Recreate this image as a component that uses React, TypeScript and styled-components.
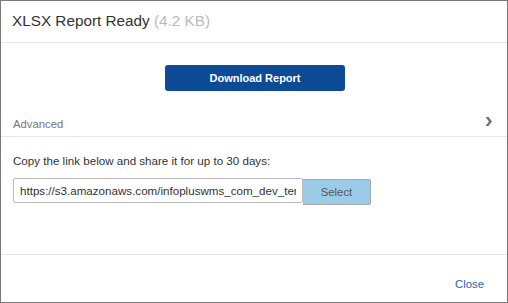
import styled, { createGlobalStyle } from "styled-components";

const GlobalStyle = createGlobalStyle`
  html, body { margin: 0; padding: 0; background: #fff; }
  * { box-sizing: border-box; }
`;

export default function App() {
  return (
    <>
      <GlobalStyle />
      <Modal>
        <Header>
          <Title>
            XLSX Report Ready <Size>(4.2 KB)</Size>
          </Title>
        </Header>
        <Body>
          <ButtonRow>
            <PrimaryButton>Download Report</PrimaryButton>
          </ButtonRow>
          <AdvancedRow>
            <AdvancedLabel>Advanced</AdvancedLabel>
            <Chevron viewBox="0 0 7 9" width="7" height="9">
              <path d="M0.5 0 L3.5 0 L7 4.5 L3.5 9 L0.5 9 L4 4.5 Z" fill="#6f6f73" />
            </Chevron>
          </AdvancedRow>
          <ShareSection>
            <Hint>Copy the link below and share it for up to 30 days:</Hint>
            <LinkRow>
              <LinkInput
                readOnly
                value="https://s3.amazonaws.com/infopluswms_com_dev_temp/report.xlsx"
              />
              <SelectButton>Select</SelectButton>
            </LinkRow>
          </ShareSection>
        </Body>
        <Footer>
          <CloseLink>Close</CloseLink>
        </Footer>
      </Modal>
    </>
  );
}

const Modal = styled.div`
  width: 508px;
  height: 303px;
  border: 1px solid #7a7a7a;
  display: flex;
  flex-direction: column;
  font-family: "Liberation Sans", Arial, sans-serif;
  color: #333;
`;

const Header = styled.div`
  height: 42px;
  border-bottom: 1px solid #e5e5e5;
  display: flex;
  align-items: center;
  padding: 0 11px 2px;
`;

const Title = styled.h3`
  margin: 0;
  font-size: 15.3px;
  font-weight: normal;
  color: #333;
`;

const Size = styled.span`
  color: #bbb;
`;

const Body = styled.div`
  flex: 1;
  display: flex;
  flex-direction: column;
  border-bottom: 1px solid #e5e5e5;
`;

const ButtonRow = styled.div`
  display: flex;
  justify-content: center;
  padding-top: 22px;
  padding-left: 2px;
`;

const PrimaryButton = styled.button`
  width: 180px;
  height: 26px;
  background: #0d4b96;
  border: none;
  border-radius: 3px;
  color: #fff;
  font-family: inherit;
  font-size: 11px;
  font-weight: bold;
  cursor: pointer;
`;

const AdvancedRow = styled.div`
  margin-top: 20px;
  height: 26px;
  display: flex;
  align-items: center;
  justify-content: space-between;
  padding: 0 15px 0 12px;
  border-bottom: 1px solid #e5e5e5;
`;

const AdvancedLabel = styled.span`
  font-size: 11.3px;
  color: #777;
`;

const Chevron = styled.svg`
  display: block;
  margin-top: -5px;
`;

const ShareSection = styled.div`
  padding: 16px 12px 0;
`;

const Hint = styled.p`
  margin: 0;
  font-size: 11.6px;
  line-height: 16px;
  color: #333;
`;

const LinkRow = styled.div`
  margin-top: 9px;
  display: flex;
  align-items: flex-start;
`;

const LinkInput = styled.input`
  width: 290px;
  height: 25px;
  border: 1px solid #bbb;
  border-radius: 2px;
  padding: 0 6px;
  font-family: inherit;
  font-size: 11.6px;
  color: #333;
  outline: none;
`;

const SelectButton = styled.button`
  width: 68px;
  height: 26px;
  margin-top: 1px;
  background: #9ccbea;
  border: 1px solid #a9a9a9;
  border-left: none;
  border-radius: 0 2px 2px 0;
  font-family: inherit;
  font-size: 11.3px;
  color: #555;
`;

const Footer = styled.div`
  height: 47px;
  display: flex;
  align-items: center;
  justify-content: flex-end;
  padding: 11px 23px 0;
`;

const CloseLink = styled.a`
  font-size: 11.3px;
  color: #2b63b8;
  cursor: pointer;
`;
